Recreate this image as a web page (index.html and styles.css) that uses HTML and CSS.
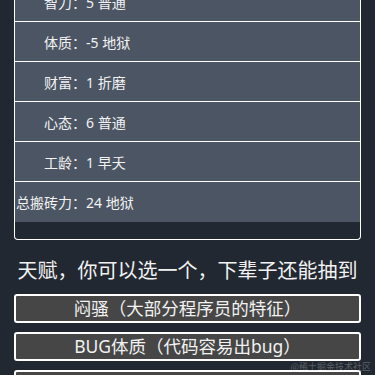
FILE: index.html
```html
<!DOCTYPE html>
<html>
  <head>
    <meta charset="utf-8">
    <title>人生重开 - 程序员版</title>
    <link rel="stylesheet" href="styles.css">
  </head>
  <body>
    <div class="page">
      <div class="attrs">
        <div class="row"><span class="label">智力：</span><span class="value">5 普通</span></div>
        <div class="row"><span class="label">体质：</span><span class="value">-5 地狱</span></div>
        <div class="row"><span class="label">财富：</span><span class="value">1 折磨</span></div>
        <div class="row"><span class="label">心态：</span><span class="value">6 普通</span></div>
        <div class="row"><span class="label">工龄：</span><span class="value">1 早夭</span></div>
        <div class="row"><span class="label">总搬砖力：</span><span class="value">24 地狱</span></div>
      </div>

      <h2 class="title">天赋，你可以选一个，下辈子还能抽到</h2>

      <div class="talents">
        <button class="talent" type="button">闷骚（大部分程序员的特征）</button>
        <button class="talent" type="button">BUG体质（代码容易出bug）</button>
        <button class="talent" type="button">头发浓密（秃头概率降低）</button>
      </div>
    </div>
    <span class="mark">@稀土掘金技术社区</span>
  </body>
</html>
```

FILE: styles.css
```css
body {
  margin: 0;
  padding: 0;
  background-color: #222831;
  color: #f2f2f2;
  font-family: "Noto Sans", "Noto Sans CJK SC", sans-serif;
  overflow: hidden;
}

.page {
  margin: 0 14px;
}

.attrs {
  margin-top: -18px;
  border: 1px solid #fff;
  border-top: none;
  border-radius: 0 0 4px 4px;
  padding-bottom: 17px;
}

.row {
  display: flex;
  align-items: center;
  height: 39px;
  background-color: #4b5563;
  border-bottom: 1px solid #fff;
  font-size: 14px;
}

.row:last-child {
  height: 40px;
  border-bottom: none;
}

.label {
  width: 71px;
  text-align: right;
  white-space: nowrap;
}

.title {
  margin: 16px 0 8px;
  font-size: 20px;
  font-weight: normal;
  line-height: 30px;
  text-align: center;
}

.talents {
  display: flex;
  flex-direction: column;
  gap: 9px;
}

.talent {
  height: 29px;
  padding: 0;
  background-color: #464646;
  color: #f2f2f2;
  border: 2px solid #fff;
  border-radius: 3px;
  font-family: "Noto Sans", "Noto Sans CJK SC", sans-serif;
  font-size: 17.5px;
  line-height: 25px;
}

.mark {
  position: absolute;
  right: 4px;
  top: 360px;
  font-size: 9px;
  color: rgba(200, 200, 200, 0.35);
  font-family: "Noto Sans CJK SC", sans-serif;
}
```
